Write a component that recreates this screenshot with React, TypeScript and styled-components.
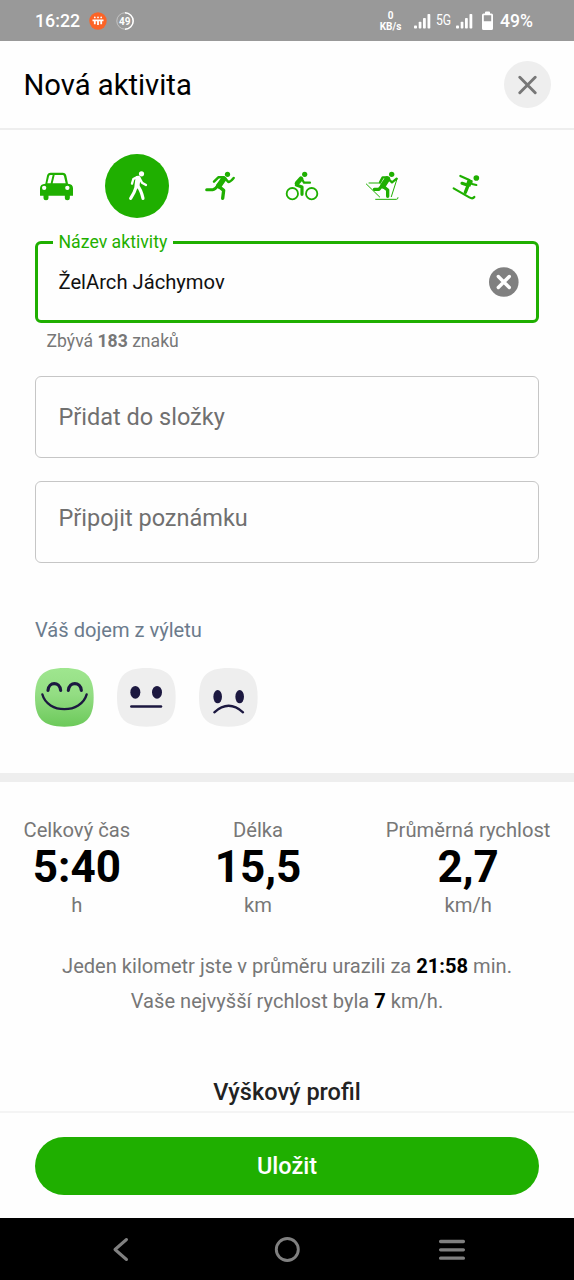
import React from "react";
import styled, { createGlobalStyle } from "styled-components";

const GREEN = "#1faf00";
const NAVY = "#1c1840";

const GlobalStyle = createGlobalStyle`
  * { box-sizing: border-box; }
  body { margin: 0; background: #fefefe; font-family: Roboto, "Liberation Sans", sans-serif; }
  button { font: inherit; border: 0; padding: 0; background: none; }
  svg { display: block; flex: none; }
`;

const Screen = styled.div`
  width: 574px;
  height: 1280px;
  display: flex;
  flex-direction: column;
  overflow: hidden;
  background: #fefefe;
`;

const StatusBar = styled.div`
  height: 41px;
  flex: none;
  display: flex;
  align-items: center;
  padding: 0 41px 0 35px;
  background: #999;
  color: #fff;
`;

const StatusText = styled.span<{ $size: number }>`
  font-size: ${(p) => p.$size}px;
  font-weight: 500;
  line-height: 24px;
`;

const StatusGroup = styled.div`
  display: flex;
  align-items: center;
  gap: 9px;
`;

const StatusRight = styled.div`
  margin-left: auto;
  display: flex;
  align-items: center;
`;

const NetSpeed = styled.div`
  width: 23px;
  margin-right: 12px;
  text-align: center;
  font-size: 10px;
  font-weight: 700;
  line-height: 11px;
`;

const Network = styled.span`
  width: 25px;
  text-align: center;
  font-size: 14.5px;
  line-height: 20px;
  transform: scaleX(0.84);
`;

const BatteryIcon = styled.svg`
  margin: 0 6px 0 8px;
`;

const Header = styled.header`
  height: 89px;
  flex: none;
  display: flex;
  align-items: center;
  justify-content: space-between;
  padding: 0 23px 0 23.5px;
  border-bottom: 2px solid #eee;
`;

const Title = styled.h1`
  margin: 0;
  font-size: 29.2px;
  font-weight: 400;
  line-height: 34px;
  color: #000;
`;

const CloseButton = styled.button`
  width: 47px;
  height: 47px;
  border-radius: 50%;
  display: grid;
  place-items: center;
  background: #eee;
`;

const Scroll = styled.main`
  flex: 1;
  min-height: 0;
  overflow: hidden;
`;

const ActivityRow = styled.div`
  display: flex;
  height: 64px;
  margin-top: 24px;
  padding-left: 14px;
`;

const Activity = styled.button`
  width: 82px;
  display: grid;
  place-items: center;
  color: ${GREEN};
`;

const ActivityDisc = styled.span<{ $active: boolean }>`
  width: 64px;
  height: 64px;
  border-radius: 50%;
  display: grid;
  place-items: center;
  background: ${(p) => (p.$active ? GREEN : "transparent")};
  color: ${(p) => (p.$active ? "#fff" : GREEN)};
`;

const Form = styled.div`
  padding: 23px 35px 0;
`;

const ActiveField = styled.fieldset`
  position: relative;
  height: 82px;
  margin: 0;
  padding: 0 17px 0 20.5px;
  border: 3px solid ${GREEN};
  border-radius: 6px;
  display: flex;
  align-items: center;
  justify-content: space-between;
`;

const FieldLabel = styled.span`
  position: absolute;
  left: 15px;
  top: -13px;
  padding: 0 6px 0 5.5px;
  background: #fefefe;
  font-size: 17.7px;
  line-height: 22px;
  color: ${GREEN};
`;

const FieldValue = styled.span`
  font-size: 20.2px;
  line-height: 28px;
  color: #111;
`;

const Hint = styled.p`
  margin: 6px 0 0 11.5px;
  font-size: 17.6px;
  line-height: 24px;
  color: #777;
`;

const Field = styled.div<{ $gap: number; $lift?: number }>`
  height: 82px;
  margin-top: ${(p) => p.$gap}px;
  padding: 0 22.5px ${(p) => p.$lift ?? 0}px;
  border: 1.5px solid #c6c6c6;
  border-radius: 6px;
  display: flex;
  align-items: center;
  font-size: 23.5px;
  color: #707070;
`;

const Question = styled.h2`
  margin: 53px 0 0;
  font-size: 20.1px;
  font-weight: 400;
  line-height: 28px;
  color: #6b7b8c;
`;

const Faces = styled.div`
  display: flex;
  gap: 23px;
  margin-top: 24px;
`;

const Divider = styled.div`
  height: 9px;
  margin-top: 46px;
  background: #eee;
`;

const Stats = styled.section`
  display: flex;
  justify-content: space-between;
  padding: 36px 23.5px 0;
`;

const Stat = styled.div`
  display: flex;
  flex-direction: column;
  align-items: center;
  font-size: 20.2px;
  line-height: 24px;
  color: #777;
`;

const StatValue = styled.strong`
  font-size: 44px;
  font-weight: 700;
  line-height: 51px;
  color: #000;
`;

const Summary = styled.p`
  margin: 32px 0 0;
  text-align: center;
  font-size: 20.1px;
  line-height: 35px;
  color: #777;

  b { color: #000; }
`;

const ProfileTitle = styled.h2`
  margin: 59px 0 0;
  text-align: center;
  font-size: 23.5px;
  font-weight: 500;
  line-height: 28px;
  color: #222;
`;

const Footer = styled.footer`
  height: 107px;
  flex: none;
  padding: 24px 35px 0;
  border-top: 2px solid #f4f4f4;
`;

const SaveButton = styled.button`
  width: 100%;
  height: 58px;
  border-radius: 29px;
  background: ${GREEN};
  color: #fff;
  font-size: 23.5px;
  font-weight: 500;
`;

const NavBar = styled.nav`
  height: 62px;
  flex: none;
  display: flex;
  align-items: center;
  justify-content: space-between;
  padding: 0 107px 0 106px;
  background: #000;
`;

const Signal = () => (
  <svg width="17" height="16" viewBox="0 0 17 16" fill="#fff">
    <rect x="0" y="12.6" width="3" height="3" rx=".8" />
    <rect x="4.7" y="8.8" width="2.7" height="6.8" rx=".8" />
    <rect x="9" y="5" width="2.8" height="10.6" rx=".8" />
    <rect x="13.5" y="1" width="2.8" height="14.6" rx=".8" />
  </svg>
);

const ActivityIcon = ({ origin, children }: { origin: string; children: React.ReactNode }) => (
  <svg
    width="40"
    height="40"
    viewBox={`${origin} 120 120`}
    fill="none"
    stroke="currentColor"
    strokeLinecap="round"
    strokeLinejoin="round"
  >
    {children}
  </svg>
);

const activities = [
  {
    name: "car",
    icon: (
      <ActivityIcon origin="15 63">
        <path
          fill="currentColor"
          fillRule="evenodd"
          stroke="none"
          d="M46 116 L51 92 Q53 83 62 83 H98 Q107 83 109 92 L114 116 Q129 117 129 130 V152 H30 V130 Q30 117 46 116Z M52 115 H62 L68 90 H62 Q58 90 57 94Z M68 115 H107 L102 94 Q101 90 98 90 H74Z M49 128.500 A6.500 6.500 0 1 0 36 128.500 A6.500 6.500 0 1 0 49 128.500Z M118.500 128.500 A6.500 6.500 0 1 0 105.500 128.500 A6.500 6.500 0 1 0 118.500 128.500Z"
        />
        <path d="M48 150V158.500M112 150V158.500" strokeWidth="15" />
      </ActivityIcon>
    ),
  },
  {
    name: "walk",
    icon: (
      <ActivityIcon origin="261 63">
        <circle cx="334.500" cy="86.500" r="7.800" fill="currentColor" stroke="none" />
        <path d="M324 100 L321 122" strokeWidth="15" />
        <path d="M320 97 L310 102 L306 116" strokeWidth="7" />
        <path d="M329 100 L336 113 L348 120" strokeWidth="7" />
        <path d="M319 124 Q314 142 302 160M324 124 Q333 134 339 160" strokeWidth="9.500" />
      </ActivityIcon>
    ),
  },
  {
    name: "run",
    icon: (
      <ActivityIcon origin="27 18">
        <circle cx="112.500" cy="43" r="7.800" fill="currentColor" stroke="none" />
        <path d="M101 57 L87 77" strokeWidth="17" />
        <path d="M101 52 H85 L72 65" strokeWidth="7.500" />
        <path d="M106 56 L115 66 Q121 66 131 54" strokeWidth="7.500" />
        <path d="M84 76 Q76 89 68 89.500 H50" strokeWidth="9" />
        <path d="M87 80 L101 91 L98 115" strokeWidth="10" />
      </ActivityIcon>
    ),
  },
  {
    name: "bike",
    icon: (
      <ActivityIcon origin="273 18">
        <circle cx="307" cy="101" r="17" strokeWidth="5.500" />
        <circle cx="365" cy="101" r="17" strokeWidth="5.500" />
        <circle cx="344" cy="43" r="7.800" fill="currentColor" stroke="none" />
        <path d="M333 56 L321 70" strokeWidth="14" />
        <path d="M335 56 L342 68 H360" strokeWidth="6.500" />
        <path d="M319 75 L336 81 V103" strokeWidth="9.500" />
      </ActivityIcon>
    ),
  },
  {
    name: "cross-country ski",
    icon: (
      <ActivityIcon origin="39 18">
        <circle cx="125" cy="43" r="8" fill="currentColor" stroke="none" />
        <path d="M112 57 L99 77" strokeWidth="17" />
        <path d="M109 52 H98 L90 67" strokeWidth="7" />
        <path d="M117 59 L126 67 L140 56" strokeWidth="7" />
        <path d="M96 77 L87 88 H73" strokeWidth="9.500" />
        <path d="M100 80 L113 90 V109" strokeWidth="10" />
        <path d="M49 72 L89 111M57 69 H91M141 57 L124 110" strokeWidth="3" />
        <path d="M77 118 H139 Q144 118 144 113" strokeWidth="3" />
      </ActivityIcon>
    ),
  },
  {
    name: "downhill ski",
    icon: (
      <ActivityIcon origin="285 18">
        <circle cx="379" cy="54" r="8.500" fill="currentColor" stroke="none" />
        <path d="M331 48 L358 60 L366 72 L379 75" strokeWidth="6.500" />
        <path d="M361 59 L354 78" strokeWidth="15" strokeLinecap="butt" />
        <path d="M363 66 L354 76 L336 70" strokeWidth="9.500" />
        <path d="M354 77 L346 97" strokeWidth="10" />
        <path d="M311 85 L358 112 Q368 118 373 111" strokeWidth="6.500" />
      </ActivityIcon>
    ),
  },
];

const Face = ({ x, fill, children }: { x: number; fill: string; children: React.ReactNode }) => (
  <svg width="59" height="59" viewBox={`${x} 174 177 177`} fill="none" stroke={NAVY} strokeLinecap="round">
    <defs>
      <linearGradient id="happy" x1="0" y1="0" x2="0" y2="1">
        <stop offset="0" stopColor="#9fe68f" />
        <stop offset=".45" stopColor="#93dd83" />
        <stop offset="1" stopColor="#6cc95a" />
      </linearGradient>
    </defs>
    <path
      transform={`translate(${x} 174)`}
      d="M88 0 C152 0 176 24 176 88 C176 152 152 176 88 176 C24 176 0 152 0 88 C0 24 24 0 88 0Z"
      fill={fill}
      stroke="none"
    />
    {children}
  </svg>
);

const stats = [
  { label: "Celkový čas", value: "5:40", unit: "h" },
  { label: "Délka", value: "15,5", unit: "km" },
  { label: "Průměrná rychlost", value: "2,7", unit: "km/h" },
];

export default function App() {
  return (
    <Screen>
      <GlobalStyle />
      <StatusBar>
        <StatusGroup>
          <StatusText $size={17.8}>16:22</StatusText>
          <svg width="18" height="18" viewBox="0 0 18 18">
            <circle cx="9" cy="9" r="8.700" fill="#fb6427" />
            <g fill="#fff">
              <circle cx="5.800" cy="5.400" r=".9" />
              <circle cx="9" cy="5.400" r=".9" />
              <circle cx="12.200" cy="5.400" r=".9" />
            </g>
            <path d="M3.500 8.400H14.500M5.800 8V12.200M9 8V13M12.200 8V12.200" stroke="#fff" strokeWidth="1.800" />
          </svg>
          <svg width="18" height="18" viewBox="0 0 18 18" fill="none">
            <circle cx="9" cy="9" r="8.200" stroke="#c4c4c4" />
            <path d="M9 .8A8.200 8.200 0 0 1 9 17.200" stroke="#fff" strokeWidth="1.500" />
            <text x="8.800" y="12.600" textAnchor="middle" fontSize="10" fontWeight="700" fill="#fff">49</text>
          </svg>
        </StatusGroup>
        <StatusRight>
          <NetSpeed>0<br />KB/s</NetSpeed>
          <Signal />
          <Network>5G</Network>
          <Signal />
          <BatteryIcon width="13" height="20" viewBox="0 0 13 20">
            <path
              fill="#fff"
              fillRule="evenodd"
              d="M4 1.500Q4 .5 5 .5H8Q9 .5 9 1.500V2.500H10.500Q12 2.500 12 4V17.500Q12 19 10.500 19H2.500Q1 19 1 17.500V4Q1 2.500 2.500 2.500H4Z M2.800 4.300V10.300H10.200V4.300Z"
            />
          </BatteryIcon>
          <StatusText $size={17.6}>49%</StatusText>
        </StatusRight>
      </StatusBar>

      <Header>
        <Title>Nová aktivita</Title>
        <CloseButton aria-label="Zavřít">
          <svg width="20" height="20" viewBox="0 0 20 20" stroke="#777" strokeWidth="2.900" strokeLinecap="round">
            <path d="M1.800 2.300 17.200 17.700M17.200 2.300 1.800 17.700" />
          </svg>
        </CloseButton>
      </Header>

      <Scroll>
        <ActivityRow>
          {activities.map((a) => (
            <Activity key={a.name}>
              <ActivityDisc $active={a.name === "walk"}>{a.icon}</ActivityDisc>
            </Activity>
          ))}
        </ActivityRow>

        <Form>
          <ActiveField>
            <FieldLabel>Název aktivity</FieldLabel>
            <FieldValue>ŽelArch Jáchymov</FieldValue>
            <svg width="30" height="30" viewBox="0 0 30 30">
              <circle cx="14.800" cy="15" r="14.800" fill="#808080" />
              <path d="M9.300 9.500 20.300 20.500M20.300 9.500 9.300 20.500" stroke="#fff" strokeWidth="3.400" strokeLinecap="round" />
            </svg>
          </ActiveField>
          <Hint>Zbývá <b>183</b> znaků</Hint>
          <Field $gap={23}>Přidat do složky</Field>
          <Field $gap={23} $lift={8}>Připojit poznámku</Field>

          <Question>Váš dojem z výletu</Question>
          <Faces>
            <Face x={45} fill="url(#happy)">
              <path d="M84 241C86 214 119 214 122 241M145 241C148 214 181 214 184 241" strokeWidth="9.500" />
              <path d="M67 253C82 312 184 312 200 253" strokeWidth="7" />
            </Face>
            <Face x={291} fill="#eee">
              <ellipse cx="346" cy="247" rx="15" ry="19" fill={NAVY} stroke="none" />
              <ellipse cx="411" cy="247" rx="15" ry="19" fill={NAVY} stroke="none" />
              <path d="M334 289.500H423" strokeWidth="7.500" />
            </Face>
            <Face x={537} fill="#eee">
              <ellipse cx="593" cy="260" rx="13" ry="20" fill={NAVY} stroke="none" />
              <ellipse cx="659" cy="260" rx="13" ry="20" fill={NAVY} stroke="none" />
              <path d="M583 307Q626 268 669 307" strokeWidth="7" />
            </Face>
          </Faces>
        </Form>

        <Divider />

        <Stats>
          {stats.map((s) => (
            <Stat key={s.label}>
              <span>{s.label}</span>
              <StatValue>{s.value}</StatValue>
              <span>{s.unit}</span>
            </Stat>
          ))}
        </Stats>

        <Summary>
          Jeden kilometr jste v průměru urazili za <b>21:58</b> min.
          <br />
          Vaše nejvyšší rychlost byla <b>7</b> km/h.
        </Summary>
        <ProfileTitle>Výškový profil</ProfileTitle>
      </Scroll>

      <Footer>
        <SaveButton>Uložit</SaveButton>
      </Footer>

      <NavBar>
        <svg width="30" height="30" viewBox="0 0 30 30" fill="none" stroke="#808080" strokeWidth="3" strokeLinecap="round" strokeLinejoin="round">
          <path d="M20.500 5.500 9 15.500 20.500 25.500" />
        </svg>
        <svg width="30" height="30" viewBox="0 0 30 30" fill="none" stroke="#808080" strokeWidth="2.900">
          <circle cx="15.300" cy="15.500" r="11" />
        </svg>
        <svg width="30" height="30" viewBox="0 0 30 30" stroke="#808080" strokeWidth="3.300" strokeLinecap="round">
          <path d="M3.600 7.500H26.400M3.600 15.800H26.400M3.600 24.200H26.400" />
        </svg>
      </NavBar>
    </Screen>
  );
}
